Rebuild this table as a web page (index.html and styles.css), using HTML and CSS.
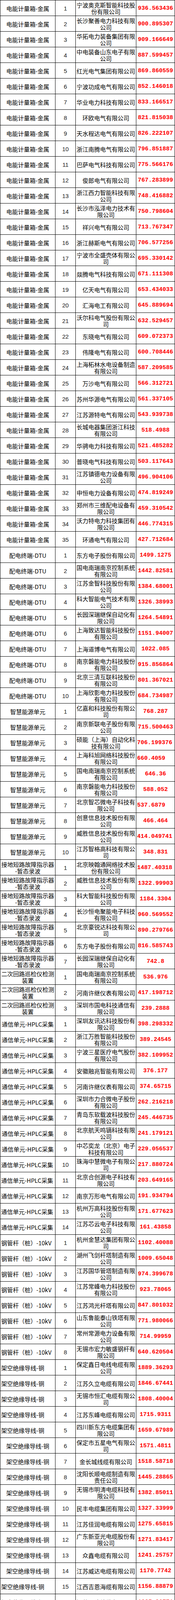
FILE: index.html
```html
<!DOCTYPE html>
<html lang="zh-CN">
<head>
<meta charset="utf-8">
<title>中标候选人报价</title>
<link rel="stylesheet" href="styles.css">
</head>
<body>
<div class="sheet">
<div class="row"><div class="c cat">电能计量箱-金属</div><div class="c idx">1</div><div class="c name">宁波奥克斯智能科技股份有限公司</div><div class="c val">936.563436</div></div>
<div class="row"><div class="c cat">电能计量箱-金属</div><div class="c idx">2</div><div class="c name">长沙聚善电力科技有限公司</div><div class="c val">900.895307</div></div>
<div class="row"><div class="c cat">电能计量箱-金属</div><div class="c idx">3</div><div class="c name">华拓电力装备集团有限公司</div><div class="c val">909.166649</div></div>
<div class="row"><div class="c cat">电能计量箱-金属</div><div class="c idx">4</div><div class="c name">中电装备山东电子有限公司</div><div class="c val">887.599457</div></div>
<div class="row"><div class="c cat">电能计量箱-金属</div><div class="c idx">5</div><div class="c name">红光电气集团有限公司</div><div class="c val">869.860559</div></div>
<div class="row"><div class="c cat">电能计量箱-金属</div><div class="c idx">6</div><div class="c name">宁波功成电气有限公司</div><div class="c val">852.146018</div></div>
<div class="row"><div class="c cat">电能计量箱-金属</div><div class="c idx">7</div><div class="c name">华业电力科技有限公司</div><div class="c val">833.166517</div></div>
<div class="row"><div class="c cat">电能计量箱-金属</div><div class="c idx">8</div><div class="c name">环欧电气有限公司</div><div class="c val">821.815038</div></div>
<div class="row"><div class="c cat">电能计量箱-金属</div><div class="c idx">9</div><div class="c name">天水程达电气有限公司</div><div class="c val">826.222107</div></div>
<div class="row"><div class="c cat">电能计量箱-金属</div><div class="c idx">10</div><div class="c name">浙江南腾电气有限公司</div><div class="c val">796.851887</div></div>
<div class="row"><div class="c cat">电能计量箱-金属</div><div class="c idx">11</div><div class="c name">巴萨电气科技有限公司</div><div class="c val">775.566176</div></div>
<div class="row"><div class="c cat">电能计量箱-金属</div><div class="c idx">12</div><div class="c name">俊郎电气有限公司</div><div class="c val">767.283899</div></div>
<div class="row"><div class="c cat">电能计量箱-金属</div><div class="c idx">13</div><div class="c name">浙江西力智能科技有限公司</div><div class="c val">748.416882</div></div>
<div class="row"><div class="c cat">电能计量箱-金属</div><div class="c idx">14</div><div class="c name">长沙市泓泽电力技术有限公司</div><div class="c val">750.798604</div></div>
<div class="row"><div class="c cat">电能计量箱-金属</div><div class="c idx">15</div><div class="c name">祥兴电气有限公司</div><div class="c val">713.767347</div></div>
<div class="row"><div class="c cat">电能计量箱-金属</div><div class="c idx">16</div><div class="c name">浙江赫斯电气有限公司</div><div class="c val">706.577256</div></div>
<div class="row"><div class="c cat">电能计量箱-金属</div><div class="c idx">17</div><div class="c name">宁波市全盛壳体有限公司</div><div class="c val">695.330142</div></div>
<div class="row"><div class="c cat">电能计量箱-金属</div><div class="c idx">18</div><div class="c name">燚腾电气科技有限公司</div><div class="c val">671.111308</div></div>
<div class="row"><div class="c cat">电能计量箱-金属</div><div class="c idx">19</div><div class="c name">亿天电气有限公司</div><div class="c val">653.434033</div></div>
<div class="row"><div class="c cat">电能计量箱-金属</div><div class="c idx">20</div><div class="c name">汇海电工有限公司</div><div class="c val">645.889694</div></div>
<div class="row"><div class="c cat">电能计量箱-金属</div><div class="c idx">21</div><div class="c name">沃尔科电气股份有限公司</div><div class="c val">632.529457</div></div>
<div class="row"><div class="c cat">电能计量箱-金属</div><div class="c idx">22</div><div class="c name">东晓电气有限公司</div><div class="c val">609.072373</div></div>
<div class="row"><div class="c cat">电能计量箱-金属</div><div class="c idx">23</div><div class="c name">伟隆电气有限公司</div><div class="c val">600.708446</div></div>
<div class="row"><div class="c cat">电能计量箱-金属</div><div class="c idx">24</div><div class="c name">上海柘林水电设备制造有限公司</div><div class="c val">587.209585</div></div>
<div class="row"><div class="c cat">电能计量箱-金属</div><div class="c idx">25</div><div class="c name">万沙电气有限公司</div><div class="c val">566.312721</div></div>
<div class="row"><div class="c cat">电能计量箱-金属</div><div class="c idx">26</div><div class="c name">苏州华源电气有限公司</div><div class="c val">561.337105</div></div>
<div class="row"><div class="c cat">电能计量箱-金属</div><div class="c idx">27</div><div class="c name">江苏源特电气有限公司</div><div class="c val">543.939738</div></div>
<div class="row"><div class="c cat">电能计量箱-金属</div><div class="c idx">28</div><div class="c name">长城电器集团浙江科技有限公司</div><div class="c val">518.4988</div></div>
<div class="row"><div class="c cat">电能计量箱-金属</div><div class="c idx">29</div><div class="c name">华骋电力科技有限公司</div><div class="c val">521.485282</div></div>
<div class="row"><div class="c cat">电能计量箱-金属</div><div class="c idx">30</div><div class="c name">普晓电气科技有限公司</div><div class="c val">503.117643</div></div>
<div class="row"><div class="c cat">电能计量箱-金属</div><div class="c idx">31</div><div class="c name">江苏镇德电力设备有限公司</div><div class="c val">496.904106</div></div>
<div class="row"><div class="c cat">电能计量箱-金属</div><div class="c idx">32</div><div class="c name">申恒电力设备有限公司</div><div class="c val">474.819249</div></div>
<div class="row"><div class="c cat">电能计量箱-金属</div><div class="c idx">33</div><div class="c name">郑州市三维配电设备有限公司</div><div class="c val">459.310542</div></div>
<div class="row"><div class="c cat">电能计量箱-金属</div><div class="c idx">34</div><div class="c name">沃力特电力科技集团有限公司</div><div class="c val">446.774315</div></div>
<div class="row"><div class="c cat">电能计量箱-金属</div><div class="c idx">35</div><div class="c name">环通电气有限公司</div><div class="c val">427.712684</div></div>
<div class="row"><div class="c cat">配电终端-DTU</div><div class="c idx">1</div><div class="c name">东方电子股份有限公司</div><div class="c val">1499.1275</div></div>
<div class="row"><div class="c cat">配电终端-DTU</div><div class="c idx">2</div><div class="c name">国电南瑞南京控制系统有限公司</div><div class="c val">1442.82581</div></div>
<div class="row"><div class="c cat">配电终端-DTU</div><div class="c idx">3</div><div class="c name">江苏金智科技股份有限公司</div><div class="c val">1384.68001</div></div>
<div class="row"><div class="c cat">配电终端-DTU</div><div class="c idx">4</div><div class="c name">科大智能电气技术有限公司</div><div class="c val">1326.38993</div></div>
<div class="row"><div class="c cat">配电终端-DTU</div><div class="c idx">5</div><div class="c name">长园深瑞继保自动化有限公司</div><div class="c val">1264.54891</div></div>
<div class="row"><div class="c cat">配电终端-DTU</div><div class="c idx">6</div><div class="c name">上海致达智能科技股份有限公司</div><div class="c val">1151.94007</div></div>
<div class="row"><div class="c cat">配电终端-DTU</div><div class="c idx">7</div><div class="c name">上海道博电气有限公司</div><div class="c val">1022.085</div></div>
<div class="row"><div class="c cat">配电终端-DTU</div><div class="c idx">8</div><div class="c name">南京磐能电力科技股份有限公司</div><div class="c val">915.856864</div></div>
<div class="row"><div class="c cat">配电终端-DTU</div><div class="c idx">9</div><div class="c name">北京三清互联科技股份有限公司</div><div class="c val">801.367021</div></div>
<div class="row"><div class="c cat">配电终端-DTU</div><div class="c idx">10</div><div class="c name">上海欣影电力科技股份有限公司</div><div class="c val">684.734987</div></div>
<div class="row"><div class="c cat">智慧能源单元</div><div class="c idx">1</div><div class="c name">亿嘉和科技股份有限公司</div><div class="c val">768.287</div></div>
<div class="row"><div class="c cat">智慧能源单元</div><div class="c idx">2</div><div class="c name">南京新联电子股份有限公司</div><div class="c val">715.500463</div></div>
<div class="row"><div class="c cat">智慧能源单元</div><div class="c idx">3</div><div class="c name">硕能（上海）自动化科技有限公司</div><div class="c val l">706.199376</div></div>
<div class="row"><div class="c cat">智慧能源单元</div><div class="c idx">4</div><div class="c name">上海科旭网络科技股份有限公司</div><div class="c val l">660.4059</div></div>
<div class="row"><div class="c cat">智慧能源单元</div><div class="c idx">5</div><div class="c name">国电南瑞南京控制系统有限公司</div><div class="c val">646.36</div></div>
<div class="row"><div class="c cat">智慧能源单元</div><div class="c idx">6</div><div class="c name">南京磐能电力科技股份有限公司</div><div class="c val">588.052</div></div>
<div class="row"><div class="c cat">智慧能源单元</div><div class="c idx">7</div><div class="c name">北京智芯微电子科技有限公司</div><div class="c val l">537.6879</div></div>
<div class="row"><div class="c cat">智慧能源单元</div><div class="c idx">8</div><div class="c name">创意信息技术股份有限公司</div><div class="c val">466.464</div></div>
<div class="row"><div class="c cat">智慧能源单元</div><div class="c idx">9</div><div class="c name">威胜信息技术股份有限公司</div><div class="c val l">414.049741</div></div>
<div class="row"><div class="c cat">智慧能源单元</div><div class="c idx">10</div><div class="c name">江苏智格高科技有限公司</div><div class="c val">348.831</div></div>
<div class="row"><div class="c cat"><span>接地短路故障指示器<br>-暂态录波</span></div><div class="c idx">1</div><div class="c name">北京映翰通网络技术股份有限公司</div><div class="c val l">1487.40318</div></div>
<div class="row"><div class="c cat"><span>接地短路故障指示器<br>-暂态录波</span></div><div class="c idx">2</div><div class="c name">威胜信息技术股份有限公司</div><div class="c val">1322.99903</div></div>
<div class="row"><div class="c cat"><span>接地短路故障指示器<br>-暂态录波</span></div><div class="c idx">3</div><div class="c name">科大智能科技股份有限公司</div><div class="c val">1184.3304</div></div>
<div class="row"><div class="c cat"><span>接地短路故障指示器<br>-暂态录波</span></div><div class="c idx">4</div><div class="c name">长沙恒电聚能电子科技有限公司</div><div class="c val">960.569552</div></div>
<div class="row"><div class="c cat"><span>接地短路故障指示器<br>-暂态录波</span></div><div class="c idx">5</div><div class="c name">北京豪锐达科技有限公司</div><div class="c val">890.279766</div></div>
<div class="row"><div class="c cat"><span>接地短路故障指示器<br>-暂态录波</span></div><div class="c idx">6</div><div class="c name">东方电子股份有限公司</div><div class="c val">816.585743</div></div>
<div class="row"><div class="c cat"><span>接地短路故障指示器<br>-暂态录波</span></div><div class="c idx">7</div><div class="c name">长园深瑞继保自动化有限公司</div><div class="c val">742.8</div></div>
<div class="row"><div class="c cat"><span>二次回路巡检仪检测<br>装置</span></div><div class="c idx">1</div><div class="c name">国电南瑞南京控制系统有限公司</div><div class="c val">536.976</div></div>
<div class="row"><div class="c cat"><span>二次回路巡检仪检测<br>装置</span></div><div class="c idx">2</div><div class="c name">河南许继仪表有限公司</div><div class="c val">417.198712</div></div>
<div class="row"><div class="c cat"><span>二次回路巡检仪检测<br>装置</span></div><div class="c idx">3</div><div class="c name">深圳市国电科技通信有限公司</div><div class="c val">239.2888</div></div>
<div class="row"><div class="c cat">通信单元-HPLC采集</div><div class="c idx">1</div><div class="c name">深圳友讯达科技股份有限公司</div><div class="c val">398.298332</div></div>
<div class="row"><div class="c cat">通信单元-HPLC采集</div><div class="c idx">2</div><div class="c name">浙江万胜智能科技股份有限公司</div><div class="c val">389.24545</div></div>
<div class="row"><div class="c cat">通信单元-HPLC采集</div><div class="c idx">3</div><div class="c name">宁波三星医疗电气股份有限公司</div><div class="c val">382.109952</div></div>
<div class="row"><div class="c cat">通信单元-HPLC采集</div><div class="c idx">4</div><div class="c name">安徽融兆智能有限公司</div><div class="c val">376.177</div></div>
<div class="row"><div class="c cat">通信单元-HPLC采集</div><div class="c idx">5</div><div class="c name">河南许继仪表有限公司</div><div class="c val">374.65715</div></div>
<div class="row"><div class="c cat">通信单元-HPLC采集</div><div class="c idx">6</div><div class="c name">深圳市力合微电子股份有限公司</div><div class="c val">262.216218</div></div>
<div class="row"><div class="c cat">通信单元-HPLC采集</div><div class="c idx">7</div><div class="c name">青岛东软载波科技股份有限公司</div><div class="c val">245.446735</div></div>
<div class="row"><div class="c cat">通信单元-HPLC采集</div><div class="c idx">8</div><div class="c name">北京航天鸣镝科技有限公司</div><div class="c val">241.179121</div></div>
<div class="row"><div class="c cat">通信单元-HPLC采集</div><div class="c idx">9</div><div class="c name">中芯奕龙（北京）电子科技有限公司</div><div class="c val">229.056537</div></div>
<div class="row"><div class="c cat l">通信单元-HPLC采集</div><div class="c idx">10</div><div class="c name">珠海中慧微电子有限公司</div><div class="c val">217.880724</div></div>
<div class="row"><div class="c cat l">通信单元-HPLC采集</div><div class="c idx">11</div><div class="c name">北京合创源电子科技有限公司</div><div class="c val">203.649165</div></div>
<div class="row"><div class="c cat l">通信单元-HPLC采集</div><div class="c idx">12</div><div class="c name">南京万形电气有限公司</div><div class="c val">191.934794</div></div>
<div class="row"><div class="c cat l">通信单元-HPLC采集</div><div class="c idx">13</div><div class="c name">杭州万高科技股份有限公司</div><div class="c val">171.677623</div></div>
<div class="row"><div class="c cat l">通信单元-HPLC采集</div><div class="c idx">14</div><div class="c name">江苏芯云电子科技有限公司</div><div class="c val">161.43858</div></div>
<div class="row"><div class="c cat l">钢管杆（桩）-10kV</div><div class="c idx">1</div><div class="c name">杭州金慧达集团有限公司</div><div class="c val">1102.40088</div></div>
<div class="row"><div class="c cat l">钢管杆（桩）-10kV</div><div class="c idx">2</div><div class="c name">湖州飞剑杆塔制造有限公司</div><div class="c val">1009.65048</div></div>
<div class="row"><div class="c cat l">钢管杆（桩）-10kV</div><div class="c idx">3</div><div class="c name">江苏国华管塔制造有限公司</div><div class="c val">974.399678</div></div>
<div class="row"><div class="c cat l">钢管杆（桩）-10kV</div><div class="c idx">4</div><div class="c name">江苏常峰电力科技股份有限公司</div><div class="c val">923.78065</div></div>
<div class="row"><div class="c cat l">钢管杆（桩）-10kV</div><div class="c idx">5</div><div class="c name">江苏鸿光杆塔有限公司</div><div class="c val">847.801032</div></div>
<div class="row"><div class="c cat l">钢管杆（桩）-10kV</div><div class="c idx">6</div><div class="c name">山东鲁能泰山铁塔有限公司</div><div class="c val">771.980066</div></div>
<div class="row"><div class="c cat l">钢管杆（桩）-10kV</div><div class="c idx">7</div><div class="c name">常州常源电力设备有限公司</div><div class="c val">714.99959</div></div>
<div class="row"><div class="c cat l">钢管杆（桩）-10kV</div><div class="c idx">8</div><div class="c name">无锡市宏力敏盛钢杆有限公司</div><div class="c val">640.620504</div></div>
<div class="row"><div class="c cat l">架空绝缘导线-铜</div><div class="c idx">1</div><div class="c name">保定鑫日电线电缆有限公司</div><div class="c val">1889.36293</div></div>
<div class="row"><div class="c cat l">架空绝缘导线-铜</div><div class="c idx">2</div><div class="c name">江苏久立电缆有限公司</div><div class="c val">1846.67441</div></div>
<div class="row"><div class="c cat l">架空绝缘导线-铜</div><div class="c idx">3</div><div class="c name">无锡市恒汇电缆有限公司</div><div class="c val">1808.40004</div></div>
<div class="row"><div class="c cat l">架空绝缘导线-铜</div><div class="c idx">4</div><div class="c name">江苏东峰电缆有限公司</div><div class="c val">1715.9311</div></div>
<div class="row"><div class="c cat l">架空绝缘导线-铜</div><div class="c idx">5</div><div class="c name">四川新东方电缆集团有限公司</div><div class="c val">1659.67989</div></div>
<div class="row"><div class="c cat">架空绝缘导线-铜</div><div class="c idx">6</div><div class="c name">保定市五星电气有限公司</div><div class="c val">1571.4811</div></div>
<div class="row"><div class="c cat">架空绝缘导线-铜</div><div class="c idx">7</div><div class="c name">金长城线缆有限公司</div><div class="c val">1518.58718</div></div>
<div class="row"><div class="c cat">架空绝缘导线-铜</div><div class="c idx">8</div><div class="c name">沈阳长顺电缆制造有限责任公司</div><div class="c val">1445.28865</div></div>
<div class="row"><div class="c cat">架空绝缘导线-铜</div><div class="c idx">9</div><div class="c name">无锡市明涛电缆科技有限公司</div><div class="c val">1382.85011</div></div>
<div class="row"><div class="c cat">架空绝缘导线-铜</div><div class="c idx">10</div><div class="c name">民丰电缆集团有限公司</div><div class="c val">1327.33999</div></div>
<div class="row"><div class="c cat">架空绝缘导线-铜</div><div class="c idx">11</div><div class="c name">江苏佳润电缆有限公司</div><div class="c val">1275.65815</div></div>
<div class="row"><div class="c cat">架空绝缘导线-铜</div><div class="c idx">12</div><div class="c name">广东新亚光电缆股份有限公司</div><div class="c val">1271.83417</div></div>
<div class="row"><div class="c cat">架空绝缘导线-铜</div><div class="c idx">13</div><div class="c name">众鑫电缆有限公司</div><div class="c val">1241.25757</div></div>
<div class="row"><div class="c cat">架空绝缘导线-铜</div><div class="c idx">14</div><div class="c name">江苏威达电缆有限公司</div><div class="c val">1170.7742</div></div>
<div class="row"><div class="c cat l">架空绝缘导线-铜</div><div class="c idx">15</div><div class="c name">江西吉恩海缆有限公司</div><div class="c val">1156.88879</div></div>
<div class="row"><div class="c cat l">架空绝缘导线-铜</div><div class="c idx">16</div><div class="c name">江苏元建线缆有限公司</div><div class="c val">1085.86771</div></div>
<div class="row"><div class="c cat l">架空绝缘导线-铜</div><div class="c idx">17</div><div class="c name">江苏海达电缆有限公司</div><div class="c val">1065.42537</div></div>
<div class="row"><div class="c cat l">架空绝缘导线-铜</div><div class="c idx">18</div><div class="c name">黄冈兴和电线电缆有限公司</div><div class="c val">1006.62834</div></div>
<div class="row"><div class="c cat l">架空绝缘导线-铜</div><div class="c idx">19</div><div class="c name">无锡华能电缆有限公司</div><div class="c val">954.880735</div></div>
<div class="row"><div class="c cat l">架空绝缘导线-铜</div><div class="c idx">20</div><div class="c name">益跃宏电缆有限公司</div><div class="c val">937.707062</div></div>
<div class="row"><div class="c cat">普通光缆</div><div class="c idx">1</div><div class="c name">江苏中天科技股份有限公司</div><div class="c val">783.502044</div></div>
<div class="row"><div class="c cat">普通光缆</div><div class="c idx">2</div><div class="c name">江苏亨通光电股份有限公司</div><div class="c val">734.568422</div></div>
<div class="row"><div class="c cat">普通光缆</div><div class="c idx">3</div><div class="c name">浙江汉维通信器材有限公司</div><div class="c val">623.617448</div></div>
</div>
</body>
</html>
```

FILE: styles.css
```css
html, body {
  margin: 0;
  padding: 0;
  background: #ffffff;
}

body {
  font-family: "Noto Sans CJK SC", "Noto Sans CJK JP", sans-serif;
  font-size: 15px;
  color: #000000;
}

.sheet {
  width: 448px;
  box-sizing: border-box;
  border-left: 1px solid #000000;
  border-top: 1px solid #000000;
}

.row {
  display: grid;
  grid-template-columns: 141px 52px 155px 99px;
  grid-template-rows: 40px;
  height: 40px;
  overflow: hidden;
}

.c {
  box-sizing: border-box;
  height: 40px;
  min-width: 0;
  border-right: 1px solid #000000;
  border-bottom: 1px solid #000000;
  display: flex;
  align-items: center;
  justify-content: center;
  text-align: center;
  overflow: hidden;
  line-height: 17px;
}

.cat {
  padding: 1px 2px 0;
}

.cat.l {
  justify-content: flex-start;
  text-align: left;
  padding-left: 2px;
}

.idx {
  font-family: "Liberation Sans", sans-serif;
  font-size: 15px;
  color: #1a1a1a;
  padding-top: 1px;
}

.name {
  padding: 1px 1px 0;
}

.val {
  font-family: "Liberation Mono", monospace;
  font-weight: bold;
  font-size: 15px;
  color: #ff0000;
  padding-top: 1px;
  white-space: nowrap;
}

.val.l {
  justify-content: flex-start;
  padding-left: 2px;
}
```
